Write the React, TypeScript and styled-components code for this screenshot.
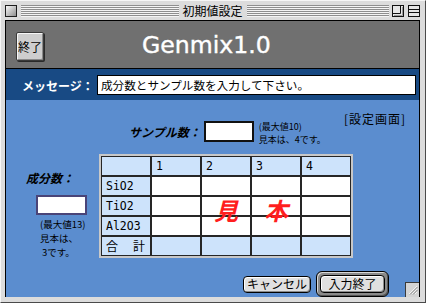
import React from 'react';
import styled, { createGlobalStyle } from 'styled-components';

const JP = `"Noto Sans CJK JP", "Noto Sans", sans-serif`;
const MONO = `"DejaVu Sans Mono", "Noto Sans CJK JP", monospace`;

const GlobalStyle = createGlobalStyle`
  html, body { margin: 0; padding: 0; background: #ffffff; }
  body { font-family: ${JP}; }
  * { box-sizing: border-box; }
`;

const Window = styled.div`
  width: 426px;
  height: 303px;
  background: #dcdcdc;
  border-top: 1px solid #f6f6f6;
  border-left: 1px solid #f6f6f6;
  border-right: 1px solid #4a4a4a;
  border-bottom: 1px solid #4a4a4a;
  display: flex;
  flex-direction: column;
  padding: 0 5px 5px 4px;
`;

const TitleBar = styled.div`
  height: 19px;
  flex: none;
  display: flex;
  align-items: center;
`;

const TitleSide = styled.div`
  flex: 1 1 0;
  min-width: 0;
  display: flex;
  align-items: center;
`;

const Stripes = styled.div`
  flex: 1;
  height: 12px;
  background: repeating-linear-gradient(to bottom, #8e8e8e 0 1px, #f4f4f4 1px 2px);
`;

const CloseBox = styled.div`
  width: 12px;
  height: 12px;
  flex: none;
  margin-right: 4px;
  border: 1px solid #1e1e1e;
  background: linear-gradient(135deg, #f8f8f8 0%, #c4c4c4 50%, #8e8e8e 100%);
`;

const TitleText = styled.div`
  flex: none;
  padding: 0 4px;
  font-size: 12px;
  line-height: 19px;
  color: #000;
`;

const BoxIcon = styled.svg<{ $ml: number }>`
  flex: none;
  display: block;
  margin-left: ${(p) => p.$ml}px;
`;

const Content = styled.div`
  flex: 1;
  border: 1px solid #000;
  display: flex;
  flex-direction: column;
  min-height: 0;
`;

const Header = styled.div`
  height: 48px;
  flex: none;
  background: #707070;
  border-bottom: 1px solid #000;
  display: flex;
  align-items: flex-start;
  padding: 11px 0 0 10px;
`;

const QuitButton = styled.div`
  width: 28px;
  height: 29px;
  border: 1px solid #3a3a3a;
  border-radius: 2px;
  background: #cecece;
  box-shadow: inset 1px 1px 0 #f6f6f6, inset -1px -1px 0 #8a8a8a, 1px 1px 0 #2a2a2a;
  display: flex;
  align-items: center;
  justify-content: center;
  font-size: 12px;
  color: #000;
  line-height: 1;
`;

const AppTitle = styled.div`
  margin: 1px 0 0 98px;
  font-family: "DejaVu Sans", "Liberation Sans", sans-serif;
  font-size: 23.6px;
  line-height: 24px;
  color: #ffffff;
  -webkit-text-stroke: 0.4px #ffffff;
`;

const MessageBar = styled.div`
  height: 31px;
  flex: none;
  background: #184a84;
  display: flex;
  align-items: center;
  padding: 1px 0 0 16px;
`;

const MessageLabel = styled.div`
  font-size: 12px;
  font-weight: bold;
  color: #ffffff;
  width: 75px;
  flex: none;
`;

const MessageField = styled.div`
  width: 319px;
  height: 20px;
  background: #ffffff;
  border: 1px solid #000;
  font-size: 11.6px;
  line-height: 18px;
  color: #000;
  padding-left: 3px;
  white-space: nowrap;
  overflow: hidden;
`;

const Panel = styled.div`
  flex: 1;
  position: relative;
  background: #5b8dcf;
  display: flex;
  flex-direction: column;
`;

const TopRow = styled.div`
  display: flex;
  align-items: flex-start;
  padding: 12px 13px 0 123px;
`;

const SampleGroup = styled.div`
  display: flex;
  align-items: center;
  margin-top: 5px;
`;

const FieldLabel = styled.div`
  font-size: 12px;
  font-weight: bold;
  font-style: italic;
  line-height: 14px;
  color: #000;
  white-space: nowrap;
`;

const NumberField = styled.div<{ $w: number; $h: number; $border: string }>`
  width: ${(p) => p.$w}px;
  height: ${(p) => p.$h}px;
  background: #ffffff;
  border: 2px solid ${(p) => p.$border};
  flex: none;
`;

const SmallNotes = styled.div<{ $lh: number; $fs: number }>`
  font-size: ${(p) => p.$fs}px;
  line-height: ${(p) => p.$lh}px;
  color: #000;
  white-space: nowrap;
`;

const SampleNotes = styled(SmallNotes)`
  margin: 3px 0 0 5px;
`;

const SampleInput = styled(NumberField)`
  margin-left: 3px;
`;

const ModeTag = styled.div`
  margin-left: auto;
  font-size: 12px;
  line-height: 14px;
  letter-spacing: 1px;
  color: #000;
`;

const MiddleRow = styled.div`
  display: flex;
  align-items: flex-start;
  margin-top: 8px;
  padding-left: 20px;
`;

const LeftColumn = styled.div`
  width: 73px;
  flex: none;
  padding-top: 17px;
  display: flex;
  flex-direction: column;
  align-items: flex-start;
`;

const ComponentInput = styled(NumberField)`
  margin: 10px 0 0 10px;
`;

const LeftNotes = styled(SmallNotes)`
  margin: 2px 0 0 14px;
`;

const NoteLine = styled.div<{ $indent?: number }>`
  padding-left: ${(p) => p.$indent ?? 0}px;
`;

const TableFrame = styled.div`
  position: relative;
  border: 2px solid #c8c8c8;
  background: #262626;
  padding: 1px;
  display: grid;
  grid-template-columns: repeat(5, 48px);
  grid-auto-rows: 18px;
  gap: 2px;
`;

const Cell = styled.div<{ $tone: 'head' | 'data' }>`
  background: ${(p) => (p.$tone === 'head' ? '#cde3fb' : '#ffffff')};
  font-family: ${MONO};
  font-size: 11.5px;
  line-height: 18px;
  color: #000;
  padding-left: 4px;
  white-space: nowrap;
`;

const TotalCell = styled(Cell)`
  font-family: ${JP};
  font-size: 12px;
  display: flex;
  justify-content: space-between;
  padding: 0 5px 0 4px;
`;

const Watermark = styled.div`
  position: absolute;
  left: 113px;
  top: 42px;
  display: flex;
  gap: 26px;
  font-size: 24px;
  line-height: 24px;
  font-weight: bold;
  font-style: italic;
  color: #ff1e1e;
  pointer-events: none;
`;

const ButtonRow = styled.div`
  display: flex;
  justify-content: flex-end;
  align-items: center;
  gap: 5px;
  margin-top: 12px;
  padding-right: 30px;
`;

const MacButton = styled.div<{ $w: number; $h: number }>`
  width: ${(p) => p.$w}px;
  height: ${(p) => p.$h}px;
  border: 1px solid #000;
  border-radius: 4px;
  background: #e0e0e0;
  box-shadow: inset 1px 1px 0 #ffffff, inset -1px -1px 0 #8c8c8c;
  display: flex;
  align-items: center;
  justify-content: center;
  font-size: 12px;
  line-height: 1;
  color: #000;
  white-space: nowrap;
`;

const DefaultRing = styled.div`
  border: 1px solid #000;
  border-radius: 6px;
  padding: 3px;
  background: #8a8a8a;
  box-shadow: inset 1px 1px 0 #d8d8d8, inset -1px -1px 0 #555;
`;

const GrowBox = styled.div`
  position: absolute;
  right: 0;
  bottom: 0;
  width: 14px;
  height: 15px;
  background: #d4d4d4;
  border-top: 1px solid #3a3a3a;
  border-left: 1px solid #3a3a3a;
  display: flex;
  align-items: center;
  justify-content: center;
`;

const heads = ['', '1', '2', '3', '4'];
const rows = ['SiO2', 'TiO2', 'Al2O3'];

export default function App() {
  return (
    <>
      <GlobalStyle />
      <Window>
        <TitleBar>
          <TitleSide>
            <CloseBox />
            <Stripes />
          </TitleSide>
          <TitleText>初期値設定</TitleText>
          <TitleSide>
            <Stripes />
            <BoxIcon $ml={3} width="12" height="12" viewBox="0 0 12 12">
              <rect x="0.5" y="0.5" width="11" height="11" fill="#e6e6e6" stroke="#111" />
              <path d="M1 8.5 H8.5 V1" fill="none" stroke="#111" />
              <path d="M2 10.5 H10.5 V2" fill="none" stroke="#999" />
            </BoxIcon>
            <BoxIcon $ml={4} width="12" height="12" viewBox="0 0 12 12">
              <rect x="0.5" y="0.5" width="11" height="11" fill="#e6e6e6" stroke="#111" />
              <path d="M1 4.5 H11 M1 7.5 H11" stroke="#111" />
            </BoxIcon>
          </TitleSide>
        </TitleBar>
        <Content>
          <Header>
            <QuitButton>終了</QuitButton>
            <AppTitle>Genmix1.0</AppTitle>
          </Header>
          <MessageBar>
            <MessageLabel>メッセージ：</MessageLabel>
            <MessageField>成分数とサンプル数を入力して下さい。</MessageField>
          </MessageBar>
          <Panel>
            <TopRow>
              <SampleGroup>
                <FieldLabel>サンプル数：</FieldLabel>
                <SampleInput $w={50} $h={21} $border="#111" />
                <SampleNotes $lh={13} $fs={9}>
                  <div>(最大値10)</div>
                  <div>見本は、4です。</div>
                </SampleNotes>
              </SampleGroup>
              <ModeTag>[設定画面]</ModeTag>
            </TopRow>
            <MiddleRow>
              <LeftColumn>
                <FieldLabel>成分数：</FieldLabel>
                <ComponentInput $w={51} $h={20} $border="#4a4478" />
                <LeftNotes $lh={14} $fs={9.5}>
                  <NoteLine>(最大値13)</NoteLine>
                  <NoteLine>見本は、</NoteLine>
                  <NoteLine $indent={2}>3です。</NoteLine>
                </LeftNotes>
              </LeftColumn>
              <TableFrame>
                {heads.map((h, i) => (
                  <Cell key={`h${i}`} $tone="head">{h}</Cell>
                ))}
                {rows.map((r) => (
                  <React.Fragment key={r}>
                    <Cell $tone="head">{r}</Cell>
                    {[1, 2, 3, 4].map((c) => (
                      <Cell key={c} $tone="data" />
                    ))}
                  </React.Fragment>
                ))}
                <TotalCell $tone="head">
                  <span>合</span>
                  <span>計</span>
                </TotalCell>
                {[1, 2, 3, 4].map((c) => (
                  <Cell key={`t${c}`} $tone="head" />
                ))}
                <Watermark>
                  <span>見</span>
                  <span>本</span>
                </Watermark>
              </TableFrame>
            </MiddleRow>
            <ButtonRow>
              <MacButton $w={68} $h={17}>キャンセル</MacButton>
              <DefaultRing>
                <MacButton $w={65} $h={18}>入力終了</MacButton>
              </DefaultRing>
            </ButtonRow>
            <GrowBox>
              <svg width="10" height="10" viewBox="0 0 10 10">
                <path d="M1 9 L9 1 M4 9 L9 4 M7 9 L9 7" stroke="#f4f4f4" strokeWidth="1" />
                <path d="M2 9.5 L9.5 2 M5 9.5 L9.5 5" stroke="#7a7a7a" strokeWidth="0.8" />
              </svg>
            </GrowBox>
          </Panel>
        </Content>
      </Window>
    </>
  );
}
